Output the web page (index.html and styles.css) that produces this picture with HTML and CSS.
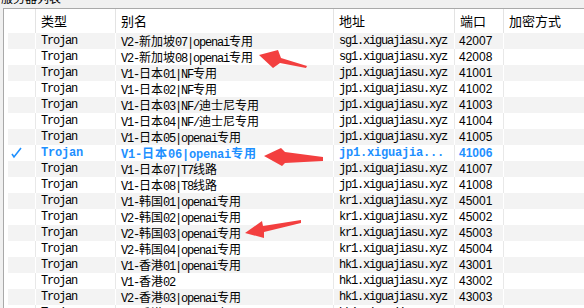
FILE: index.html
```html
<!DOCTYPE html>
<html lang="zh-CN">
<head>
    <meta charset="UTF-8">
    <meta name="viewport" content="width=device-width, initial-scale=1.0">
    <title>服务器列表</title>
    <link rel="stylesheet" href="styles.css">
</head>
<body>

    <div class="caption"><span>服务器列表</span></div>
    <div class="list">
        <div class="row head">
            <div class="cell"></div>
            <div class="cell">类型</div>
            <div class="cell">别名</div>
            <div class="cell">地址</div>
            <div class="cell">端口</div>
            <div class="cell last">加密方式</div>
        </div>
        <div id="rows"></div>
    </div>

    <svg class="arrows" width="584" height="308" viewBox="0 0 584 308">
        <polygon points="259,55 278,50 281,58 307,66 306,68 280,63 273,68"/>
        <polygon points="264,156 281,148 285,152 323,157 323,161 285,163 282,166"/>
        <polygon points="245,233 262,221 263,226 301,220 301,223 264,232 264,238"/>
    </svg>

    <script>
        const servers = [
            ["V2-新加坡07|openai专用", "sg1.xiguajiasu.xyz", "42007"],
            ["V2-新加坡08|openai专用", "sg1.xiguajiasu.xyz", "42008"],
            ["V1-日本01|NF专用", "jp1.xiguajiasu.xyz", "41001"],
            ["V1-日本02|NF专用", "jp1.xiguajiasu.xyz", "41002"],
            ["V1-日本03|NF/迪士尼专用", "jp1.xiguajiasu.xyz", "41003"],
            ["V1-日本04|NF/迪士尼专用", "jp1.xiguajiasu.xyz", "41004"],
            ["V1-日本05|openai专用", "jp1.xiguajiasu.xyz", "41005"],
            ["V1-日本06|openai专用", "jp1.xiguajia...", "41006"],
            ["V1-日本07|T7线路", "jp1.xiguajiasu.xyz", "41007"],
            ["V1-日本08|T8线路", "jp1.xiguajiasu.xyz", "41008"],
            ["V1-韩国01|openai专用", "kr1.xiguajiasu.xyz", "45001"],
            ["V2-韩国02|openai专用", "kr1.xiguajiasu.xyz", "45002"],
            ["V2-韩国03|openai专用", "kr1.xiguajiasu.xyz", "45003"],
            ["V2-韩国04|openai专用", "kr1.xiguajiasu.xyz", "45004"],
            ["V1-香港01|openai专用", "hk1.xiguajiasu.xyz", "43001"],
            ["V1-香港02", "hk1.xiguajiasu.xyz", "43002"],
            ["V2-香港03|openai专用", "hk1.xiguajiasu.xyz", "43003"],
            ["V2-香港04|openai专用", "hk1.xiguajiasu.xyz", "43004"]
        ];
        const selected = 7;

        // CJK runs get their own font, latin stays half width
        function wrapCjk(text) {
            return text.replace(/([\u4e00-\u9fff]+)/g, '<span class="cjk">$1</span>');
        }

        let html = "";
        servers.forEach((s, i) => {
            let cls = "row";
            if (i % 2 === 0) cls += " alt";
            if (i === selected) cls += " sel";
            const check = i === selected
                ? '<svg width="16" height="16" viewBox="0 0 16 16"><polyline points="4,9 6,12 13,3" fill="none" stroke="#1e90ff" stroke-width="1.6"/></svg>'
                : "";
            html += `
                <div class="${cls}">
                    <div class="cell check">${check}</div>
                    <div class="cell mono">Trojan</div>
                    <div class="cell mono">${wrapCjk(s[0])}</div>
                    <div class="cell mono">${s[1]}</div>
                    <div class="cell port">${s[2]}</div>
                    <div class="cell last"></div>
                </div>
            `;
        });
        document.getElementById("rows").innerHTML = html;
    </script>
</body>
</html>
```

FILE: styles.css
```css
body {
    margin: 0;
    height: 308px;
    overflow: hidden;
    background-color: #f0f0f0;
    font-family: "Noto Sans CJK SC", sans-serif;
    color: #000;
}
.caption {
    height: 8px;
    overflow: hidden;
    font-size: 12px;
    padding-left: 1px;
}
.caption span {
    display: block;
    line-height: 12px;
    margin-top: -8px;
}
.list {
    margin-left: 3px;
    height: 299px;
    overflow: hidden;
    background: #fff;
    border-left: 1px solid #a9a9a9;
    border-top: 1px solid #a9a9a9;
    padding-left: 4px;
}
.row {
    display: grid;
    grid-template-columns: 28px 80px 218px 121px 49px 1fr;
    height: 16px;
    line-height: 16px;
    font-size: 12px;
}
.row.head {
    height: 24px;
    line-height: 24px;
    font-size: 13px;
}
.cell {
    box-sizing: border-box;
    padding-left: 5px;
    border-right: 1px solid #e8e8e8;
    white-space: nowrap;
    overflow: hidden;
}
.cell.last {
    border-right: none;
}
.row.head .cell {
    border-right-color: #e3e3e3;
}
.row.alt {
    background-color: #f3f3f3;
}
.row.alt .cell {
    border-right-color: #fff;
}
.cell.check {
    padding-left: 0;
}
.cell.check svg {
    display: block;
}
.mono {
    font-family: "Liberation Mono", monospace;
    font-size: 12px;
    letter-spacing: -1.2px;
}
.cjk {
    font-family: "Noto Sans CJK SC", sans-serif;
    font-size: 12px;
    letter-spacing: 0;
}
.port {
    font-family: "Liberation Sans", Arial, sans-serif;
    font-size: 12px;
    padding-left: 4px;
}
.row.sel {
    color: #1e90ff;
    font-weight: bold;
}
.row.sel .mono {
    letter-spacing: -0.2px;
}
.row.sel .cjk {
    letter-spacing: 1px;
}
.arrows {
    position: absolute;
    left: 0;
    top: 0;
    fill: #f33f3f;
    pointer-events: none;
}
```
